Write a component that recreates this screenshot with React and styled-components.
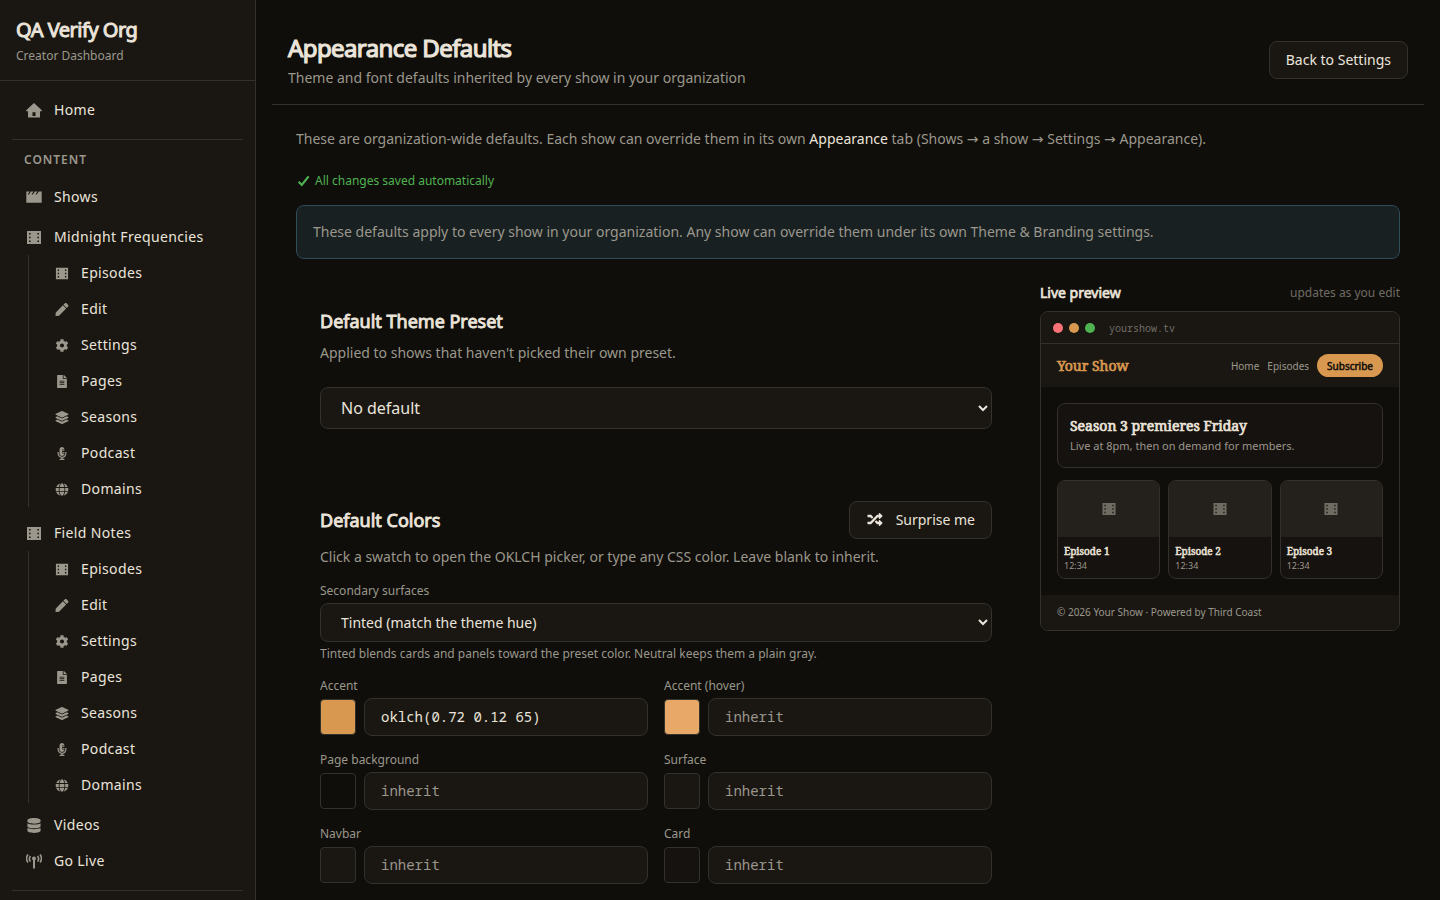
import { useState } from "react";
import styled, { createGlobalStyle, css } from "styled-components";
import {
  FaPen,
  FaCog,
  FaFileAlt,
  FaLayerGroup,
  FaMicrophoneAlt,
  FaGlobe,
  FaDatabase,
  FaRandom,
} from "react-icons/fa";

const colors = {
  page: "#0f0e0a",
  surface: "#1a1713",
  card: "#16120f",
  thumb: "#24211c",
  border: "#33312b",
  text: "#ebe4da",
  muted: "#9b978c",
  dim: "#6f6c64",
  accent: "#d99850",
  accentHover: "#e8a868",
  green: "#4fb352",
};

const sans = `"Noto Sans", "DejaVu Sans", sans-serif`;
const serif = `"Noto Serif", "Liberation Serif", serif`;
const mono = `"Noto Sans Mono", "DejaVu Sans Mono", monospace`;

const GlobalStyle = createGlobalStyle`
  * {
    box-sizing: border-box;
  }

  body {
    margin: 0;
    background: ${colors.page};
    color: ${colors.text};
    color-scheme: dark;
    font-family: ${sans};
    font-size: 14px;
    line-height: 20px;
  }

  h1, h2, h3, p, ul {
    margin: 0;
    padding: 0;
  }

  button, input, select {
    font-family: inherit;
  }
`;

/* heavy look built on the regular cut */
const heading = css`
  font-weight: 400;
  -webkit-text-stroke: 0.05em currentColor;
`;

const Layout = styled.div`
  display: flex;
  height: 100vh;
  overflow: hidden;
`;

/* ---------- sidebar ---------- */

const Sidebar = styled.aside`
  width: 256px;
  flex-shrink: 0;
  overflow: hidden;
  background: ${colors.surface};
  border-right: 1px solid ${colors.border};
`;

const OrgHeader = styled.div`
  padding: 16px;
  border-bottom: 1px solid ${colors.border};
`;

const OrgName = styled.h2`
  ${heading}
  font-size: 20px;
  line-height: 28px;
  letter-spacing: -0.025em;
`;

const OrgRole = styled.p`
  margin-top: 4px;
  font-size: 12px;
  line-height: 16px;
  color: ${colors.muted};
`;

const Nav = styled.nav`
  display: flex;
  flex-direction: column;
  padding: 11px 12px;
`;

const NavItem = styled.a`
  display: flex;
  align-items: center;
  gap: 12px;
  height: 36px;
  padding: 0 14px;
  font-size: 14px;
  letter-spacing: 0.025em;
  color: ${colors.text};
  text-decoration: none;

  svg {
    width: ${(p) => (p.$sub ? "14px" : "16px")};
    height: ${(p) => (p.$sub ? "13px" : "15px")};
    color: ${colors.muted};
  }
`;

const NavDivider = styled.hr`
  width: 100%;
  height: 1px;
  margin: 11px 0 10px;
  border: 0;
  background: ${colors.border};
`;

const NavHeading = styled.h3`
  margin-bottom: 9px;
  padding: 0 12px;
  font-size: 12px;
  line-height: 20px;
  font-weight: 600;
  letter-spacing: 0.08em;
  text-transform: uppercase;
  color: ${colors.muted};
`;

const NavGroup = styled.div`
  margin: 4px 0;
`;

const SubNav = styled.div`
  margin-left: 16px;
  padding-left: 12px;
  border-left: 1px solid ${colors.border};
`;

/* ---------- main ---------- */

const Main = styled.main`
  flex: 1;
  min-width: 0;
  padding: 16px;
`;

const PageHeader = styled.header`
  display: flex;
  align-items: center;
  justify-content: space-between;
  padding: 16px;
  border-bottom: 1px solid ${colors.border};
`;

const PageTitle = styled.h1`
  ${heading}
  font-size: 24px;
  line-height: 32px;
  letter-spacing: -0.025em;
`;

const PageSubtitle = styled.p`
  margin-top: 4px;
  color: ${colors.muted};
`;

const Button = styled.button`
  display: inline-flex;
  align-items: center;
  gap: 12px;
  height: 38px;
  padding: 0 16px 2px;
  border: 1px solid ${colors.border};
  border-radius: 8px;
  background: ${colors.surface};
  color: ${colors.text};
  font-size: 14px;

  svg {
    width: 18px;
    height: 15px;
  }
`;

const Content = styled.div`
  padding: 24px;
`;

const Intro = styled.p`
  color: ${colors.muted};

  strong {
    font-weight: 400;
    color: ${colors.text};
  }
`;

const SaveStatus = styled.p`
  display: flex;
  align-items: center;
  gap: 4px;
  margin-top: 24px;
  font-size: 12px;
  line-height: 16px;
  color: ${colors.green};

  svg {
    width: 15px;
    height: 12px;
  }
`;

const Notice = styled.div`
  margin-top: 16px;
  padding: 16px;
  border: 1px solid #2d4c58;
  border-radius: 8px;
  background: #182022;
  color: ${colors.muted};
`;

const Columns = styled.div`
  display: grid;
  grid-template-columns: minmax(0, 1fr) 360px;
  gap: 24px;
  align-items: start;
  margin-top: 24px;
`;

const Sections = styled.div`
  display: flex;
  flex-direction: column;
  gap: 24px;
`;

const Section = styled.section`
  padding: 24px;
`;

const SectionHead = styled.div`
  display: flex;
  align-items: center;
  justify-content: space-between;
`;

const SectionTitle = styled.h2`
  ${heading}
  font-size: 18px;
  line-height: 28px;
`;

const SectionText = styled.p`
  margin-top: 8px;
  color: ${colors.muted};
`;

const Select = styled.select`
  display: block;
  width: 100%;
  height: ${(p) => (p.$large ? "42px" : "39px")};
  margin-top: ${(p) => (p.$large ? "24px" : "4px")};
  padding: 0 16px;
  border: 1px solid ${colors.border};
  border-radius: 8px;
  background-color: ${colors.surface};
  color: ${colors.text};
  font-size: ${(p) => (p.$large ? "16px" : "14px")};
`;

const Label = styled.label`
  display: block;
  font-size: 12px;
  line-height: 16px;
  color: ${colors.muted};
`;

const SurfaceField = styled.div`
  margin-top: 16px;
`;

const Hint = styled.p`
  margin-top: 4px;
  font-size: 12px;
  line-height: 16px;
  color: ${colors.muted};
`;

const ColorGrid = styled.div`
  display: grid;
  grid-template-columns: 1fr 1fr;
  gap: 16px;
  margin-top: 16px;
`;

const ColorRow = styled.div`
  display: flex;
  align-items: center;
  gap: 8px;
  margin-top: 4px;
`;

const Swatch = styled.button`
  width: 36px;
  height: 36px;
  flex-shrink: 0;
  padding: 0;
  border: 1px solid ${colors.border};
  border-radius: 4px;
  background: ${(p) => p.$color};
`;

const ColorInput = styled.input`
  flex: 1;
  min-width: 0;
  height: 38px;
  padding: 0 16px 2px;
  border: 1px solid ${colors.border};
  border-radius: 8px;
  background: ${colors.surface};
  color: ${colors.text};
  font-family: ${mono};
  font-size: 14px;

  &::placeholder {
    color: ${colors.muted};
  }
`;

/* ---------- live preview ---------- */

const PreviewHead = styled.div`
  display: flex;
  align-items: center;
  justify-content: space-between;
  margin-bottom: 8px;
  line-height: 20px;
`;

const PreviewTitle = styled.h3`
  ${heading}
  font-size: 14px;
`;

const PreviewNote = styled.span`
  font-size: 12px;
  color: ${colors.dim};
`;

const Browser = styled.div`
  overflow: hidden;
  border: 1px solid ${colors.border};
  border-radius: 8px;
  background: ${colors.page};
`;

const Chrome = styled.div`
  display: flex;
  align-items: center;
  gap: 6px;
  height: 32px;
  padding: 0 12px;
  border-bottom: 1px solid ${colors.border};
  background: ${colors.surface};
`;

const Dot = styled.span`
  width: 10px;
  height: 10px;
  border-radius: 50%;
  background: ${(p) => p.$color};
`;

const Url = styled.span`
  margin-left: 8px;
  font-family: ${mono};
  font-size: 10px;
  color: ${colors.dim};
`;

const SiteNav = styled.div`
  display: flex;
  align-items: center;
  gap: 8px;
  height: 43px;
  padding: 0 16px;
  background: ${colors.surface};
`;

const SiteName = styled.span`
  ${heading}
  flex: 1;
  font-family: ${serif};
  font-size: 14px;
  color: ${colors.accent};
`;

const SiteLink = styled.a`
  font-size: 10px;
  color: ${colors.muted};
  text-decoration: none;
`;

const Subscribe = styled.button`
  ${heading}
  height: 23px;
  padding: 0 10px;
  border: 0;
  border-radius: 12px;
  background: ${colors.accent};
  color: ${colors.page};
  font-size: 10px;
`;

const SiteBody = styled.div`
  display: flex;
  flex-direction: column;
  gap: 12px;
  padding: 16px;
`;

const Hero = styled.div`
  padding: 12px 12px 13px;
  border: 1px solid ${colors.border};
  border-radius: 8px;
  background: ${colors.card};
`;

const HeroTitle = styled.h3`
  ${heading}
  font-family: ${serif};
  font-size: 14px;
  line-height: 20px;
`;

const HeroText = styled.p`
  margin-top: 2px;
  font-size: 11px;
  line-height: 16px;
  color: ${colors.muted};
`;

const Episodes = styled.div`
  display: grid;
  grid-template-columns: repeat(3, 1fr);
  gap: 8px;
`;

const Episode = styled.article`
  overflow: hidden;
  border: 1px solid ${colors.border};
  border-radius: 8px;
  background: ${colors.card};
`;

const Thumb = styled.div`
  display: flex;
  align-items: center;
  justify-content: center;
  height: 56px;
  background: ${colors.thumb};
  color: ${colors.dim};

  svg {
    width: 14px;
    height: 14px;
  }
`;

const EpisodeInfo = styled.div`
  padding: 6px;
`;

const EpisodeTitle = styled.h3`
  ${heading}
  font-family: ${serif};
  font-size: 10px;
  line-height: 16px;
`;

const Duration = styled.p`
  font-size: 9px;
  line-height: 13px;
  color: ${colors.muted};
`;

const SiteFooter = styled.div`
  padding: 8px 16px;
  background: ${colors.surface};
  font-size: 10px;
  line-height: 19px;
  color: ${colors.muted};
`;

/* ---------- icons ---------- */

function HomeIcon() {
  return (
    <svg viewBox="0 0 16 15" fill="currentColor" aria-hidden="true">
      <path
        fillRule="evenodd"
        d="M8 0 .2 7.2V8.2H2V14.6h12V8.2h1.8V7.2L8 0zM6.5 9.2h3v3.8h-3V9.2z"
      />
    </svg>
  );
}

function ClapperIcon() {
  return (
    <svg viewBox="0 0 16 15" fill="currentColor" aria-hidden="true">
      <path d="M.3 1.6h3.4L1.6 4.6h1.3l2.1-3h2.6L5.5 4.6h1.3l2.1-3h2.6L9.4 4.6h1.3l2.1-3h2.9v11.2H.3z" />
    </svg>
  );
}

function FilmIcon() {
  return (
    <svg viewBox="-.5 -.5 15 15" fill="currentColor" aria-hidden="true">
      <path
        fillRule="evenodd"
        d="M0 .5h14v13H0zM2 2.5v1.6h1.6V2.5zM2 6.2v1.6h1.6V6.2zM2 9.9v1.6h1.6V9.9zM10.4 2.5v1.6H12V2.5zM10.4 6.2v1.6H12V6.2zM10.4 9.9v1.6H12V9.9z"
      />
    </svg>
  );
}

function TowerIcon() {
  return (
    <svg viewBox="0 0 16 15" fill="none" stroke="currentColor" aria-hidden="true">
      <circle cx="8" cy="4.6" r="2" fill="currentColor" stroke="none" />
      <path d="M8 5v9.6" strokeWidth="2" />
      <path
        d="M4.5 1.9a4.4 4.4 0 0 0 0 5.6M11.5 1.9a4.4 4.4 0 0 1 0 5.6M2 .6a6.6 6.6 0 0 0 0 8M14 .6a6.6 6.6 0 0 1 0 8"
        strokeWidth="1.6"
      />
    </svg>
  );
}

function CheckIcon() {
  return (
    <svg viewBox="0 0 15 12" fill="none" stroke="currentColor" aria-hidden="true">
      <path d="M2.6 6.8 5.8 10 12.6 1.4" strokeWidth="2.1" />
    </svg>
  );
}

const showLinks = [
  { label: "Episodes", Icon: FilmIcon },
  { label: "Edit", Icon: FaPen },
  { label: "Settings", Icon: FaCog },
  { label: "Pages", Icon: FaFileAlt },
  { label: "Seasons", Icon: FaLayerGroup },
  { label: "Podcast", Icon: FaMicrophoneAlt },
  { label: "Domains", Icon: FaGlobe },
];

const shows = ["Midnight Frequencies", "Field Notes"];

const colorFields = [
  { id: "accent", label: "Accent", swatch: colors.accent, value: "oklch(0.72 0.12 65)" },
  { id: "accent-hover", label: "Accent (hover)", swatch: colors.accentHover, value: "" },
  { id: "page-bg", label: "Page background", swatch: colors.page, value: "" },
  { id: "surface", label: "Surface", swatch: colors.surface, value: "" },
  { id: "navbar", label: "Navbar", swatch: colors.surface, value: "" },
  { id: "card", label: "Card", swatch: colors.card, value: "" },
];

function ShowGroup({ name }) {
  return (
    <NavGroup>
      <NavItem href="#">
        <FilmIcon />
        {name}
      </NavItem>
      <SubNav>
        {showLinks.map(({ label, Icon }) => (
          <NavItem href="#" $sub key={label}>
            <Icon />
            {label}
          </NavItem>
        ))}
      </SubNav>
    </NavGroup>
  );
}

function ColorField({ field }) {
  const [value, setValue] = useState(field.value);

  return (
    <div>
      <Label htmlFor={field.id}>{field.label}</Label>
      <ColorRow>
        <Swatch type="button" $color={field.swatch} aria-label={`Pick ${field.label}`} />
        <ColorInput
          id={field.id}
          type="text"
          placeholder="inherit"
          value={value}
          onChange={(e) => setValue(e.target.value)}
        />
      </ColorRow>
    </div>
  );
}

function Preview() {
  return (
    <aside>
      <PreviewHead>
        <PreviewTitle>Live preview</PreviewTitle>
        <PreviewNote>updates as you edit</PreviewNote>
      </PreviewHead>
      <Browser>
        <Chrome>
          <Dot $color="#fb7277" />
          <Dot $color={colors.accent} />
          <Dot $color={colors.green} />
          <Url>yourshow.tv</Url>
        </Chrome>
        <SiteNav>
          <SiteName>Your Show</SiteName>
          <SiteLink href="#">Home</SiteLink>
          <SiteLink href="#">Episodes</SiteLink>
          <Subscribe type="button">Subscribe</Subscribe>
        </SiteNav>
        <SiteBody>
          <Hero>
            <HeroTitle>Season 3 premieres Friday</HeroTitle>
            <HeroText>Live at 8pm, then on demand for members.</HeroText>
          </Hero>
          <Episodes>
            {[1, 2, 3].map((n) => (
              <Episode key={n}>
                <Thumb>
                  <FilmIcon />
                </Thumb>
                <EpisodeInfo>
                  <EpisodeTitle>Episode {n}</EpisodeTitle>
                  <Duration>12:34</Duration>
                </EpisodeInfo>
              </Episode>
            ))}
          </Episodes>
        </SiteBody>
        <SiteFooter>© 2026 Your Show · Powered by Third Coast</SiteFooter>
      </Browser>
    </aside>
  );
}

function App() {
  return (
    <Layout>
      <GlobalStyle />
      <Sidebar>
        <OrgHeader>
          <OrgName>QA Verify Org</OrgName>
          <OrgRole>Creator Dashboard</OrgRole>
        </OrgHeader>
        <Nav>
          <NavItem href="#">
            <HomeIcon />
            Home
          </NavItem>
          <NavDivider />
          <NavHeading>Content</NavHeading>
          <NavItem href="#">
            <ClapperIcon />
            Shows
          </NavItem>
          {shows.map((name) => (
            <ShowGroup name={name} key={name} />
          ))}
          <NavItem href="#">
            <FaDatabase />
            Videos
          </NavItem>
          <NavItem href="#">
            <TowerIcon />
            Go Live
          </NavItem>
          <NavDivider />
        </Nav>
      </Sidebar>

      <Main>
        <PageHeader>
          <div>
            <PageTitle>Appearance Defaults</PageTitle>
            <PageSubtitle>
              Theme and font defaults inherited by every show in your organization
            </PageSubtitle>
          </div>
          <Button type="button">Back to Settings</Button>
        </PageHeader>

        <Content>
          <Intro>
            These are organization-wide defaults. Each show can override them in its own{" "}
            <strong>Appearance</strong> tab (Shows → a show → Settings → Appearance).
          </Intro>
          <SaveStatus>
            <CheckIcon />
            All changes saved automatically
          </SaveStatus>
          <Notice>
            These defaults apply to every show in your organization. Any show can override
            them under its own Theme &amp; Branding settings.
          </Notice>

          <Columns>
            <Sections>
              <Section>
                <SectionTitle>Default Theme Preset</SectionTitle>
                <SectionText>Applied to shows that haven't picked their own preset.</SectionText>
                <Select $large aria-label="Default theme preset">
                  <option>No default</option>
                </Select>
              </Section>

              <Section>
                <SectionHead>
                  <SectionTitle>Default Colors</SectionTitle>
                  <Button type="button">
                    <FaRandom />
                    Surprise me
                  </Button>
                </SectionHead>
                <SectionText>
                  Click a swatch to open the OKLCH picker, or type any CSS color. Leave blank
                  to inherit.
                </SectionText>
                <SurfaceField>
                  <Label htmlFor="secondary-surfaces">Secondary surfaces</Label>
                  <Select id="secondary-surfaces">
                    <option>Tinted (match the theme hue)</option>
                  </Select>
                  <Hint>
                    Tinted blends cards and panels toward the preset color. Neutral keeps them
                    a plain gray.
                  </Hint>
                </SurfaceField>
                <ColorGrid>
                  {colorFields.map((field) => (
                    <ColorField field={field} key={field.id} />
                  ))}
                </ColorGrid>
              </Section>
            </Sections>
            <Preview />
          </Columns>
        </Content>
      </Main>
    </Layout>
  );
}

export default App;
